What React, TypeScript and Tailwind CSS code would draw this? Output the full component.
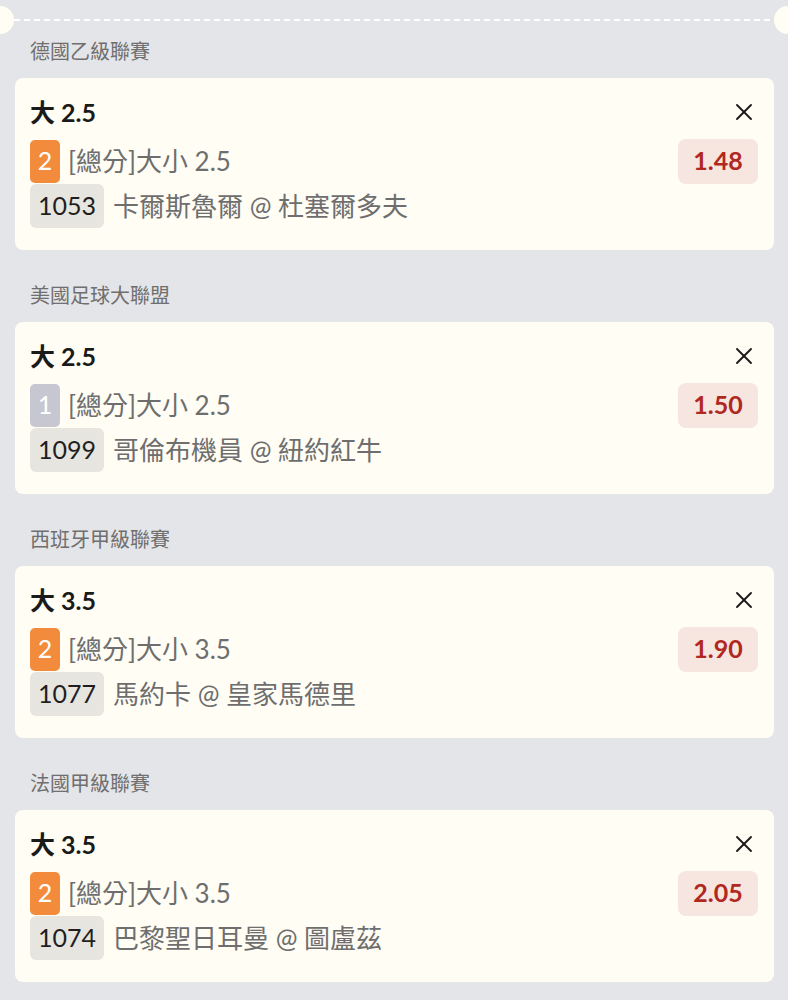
import { X } from 'lucide-react';

type Bet = {
  league: string;
  pick: string;
  level: number;
  market: string;
  odds: string;
  code: string;
  match: string;
};

const bets: Bet[] = [
  { league: '德國乙級聯賽', pick: '大 2.5', level: 2, market: '[總分]大小 2.5', odds: '1.48', code: '1053', match: '卡爾斯魯爾 @ 杜塞爾多夫' },
  { league: '美國足球大聯盟', pick: '大 2.5', level: 1, market: '[總分]大小 2.5', odds: '1.50', code: '1099', match: '哥倫布機員 @ 紐約紅牛' },
  { league: '西班牙甲級聯賽', pick: '大 3.5', level: 2, market: '[總分]大小 3.5', odds: '1.90', code: '1077', match: '馬約卡 @ 皇家馬德里' },
  { league: '法國甲級聯賽', pick: '大 3.5', level: 2, market: '[總分]大小 3.5', odds: '2.05', code: '1074', match: '巴黎聖日耳曼 @ 圖盧茲' },
];

function BetCard({ bet }: { bet: Bet }) {
  return (
    <div className="bg-[#fffdf4] rounded-[8px] pt-[12px] pb-[22px] pl-[15px] pr-[16px]">
      <div className="flex items-center justify-between h-[44px]">
        <span className="text-[25px] font-bold text-[#1a1a1a] leading-none">{bet.pick}</span>
        <X className="w-[28px] h-[28px] text-[#1a1a1a]" strokeWidth={1.6} />
      </div>
      <div className="flex items-center justify-between h-[44px] mt-[5px]">
        <div className="flex items-center h-full">
          <span
            className={
              'flex items-center justify-center w-[30px] h-[43px] rounded-[5px] text-white text-[25px] ' +
              (bet.level === 2 ? 'bg-[#f38b3c]' : 'bg-[#c6c7d0]')
            }
          >
            {bet.level}
          </span>
          <span className="ml-[8px] text-[26px] text-[#6e6e6e]">{bet.market}</span>
        </div>
        <span className="flex items-center justify-center w-[80px] h-[45px] rounded-[8px] bg-[#f7e6e0] text-[#b0281f] text-[25px] font-bold">
          {bet.odds}
        </span>
      </div>
      <div className="flex items-center h-[44px] mt-[1px]">
        <span className="flex items-center justify-center h-full px-[8px] rounded-[6px] bg-[#e7e5df] text-[25px] text-[#1f1f1f]">
          {bet.code}
        </span>
        <span className="ml-[9px] text-[26px] text-[#6e6e6e]">{bet.match}</span>
      </div>
    </div>
  );
}

export default function App() {
  return (
    <div className="min-h-screen bg-[#e4e5e8] font-['Lato','Noto_Sans_CJK_TC',sans-serif] overflow-hidden">
      {/* ticket edge */}
      <div className="flex items-center h-[28px] mt-[6px]">
        <div className="w-[28px] h-[28px] rounded-full bg-[#fffdf4] -ml-[14px] shrink-0" />
        <div className="flex-1 h-[2px] bg-[repeating-linear-gradient(90deg,#ffffff_0px,#ffffff_6px,transparent_6px,transparent_10px)]" />
        <div className="w-[28px] h-[28px] rounded-full bg-[#fffdf4] -mr-[14px] shrink-0" />
      </div>
      <div className="px-[15px] pr-[14px]">
        {bets.map((bet, i) => (
          <div key={i} className={i === 0 ? 'mt-[3px]' : 'mt-[31px]'}>
            <div className="h-[28px] leading-[28px] pl-[15px] text-[20px] text-[#6f6f6f]">{bet.league}</div>
            <div className="mt-[13px]">
              <BetCard bet={bet} />
            </div>
          </div>
        ))}
      </div>
    </div>
  );
}
